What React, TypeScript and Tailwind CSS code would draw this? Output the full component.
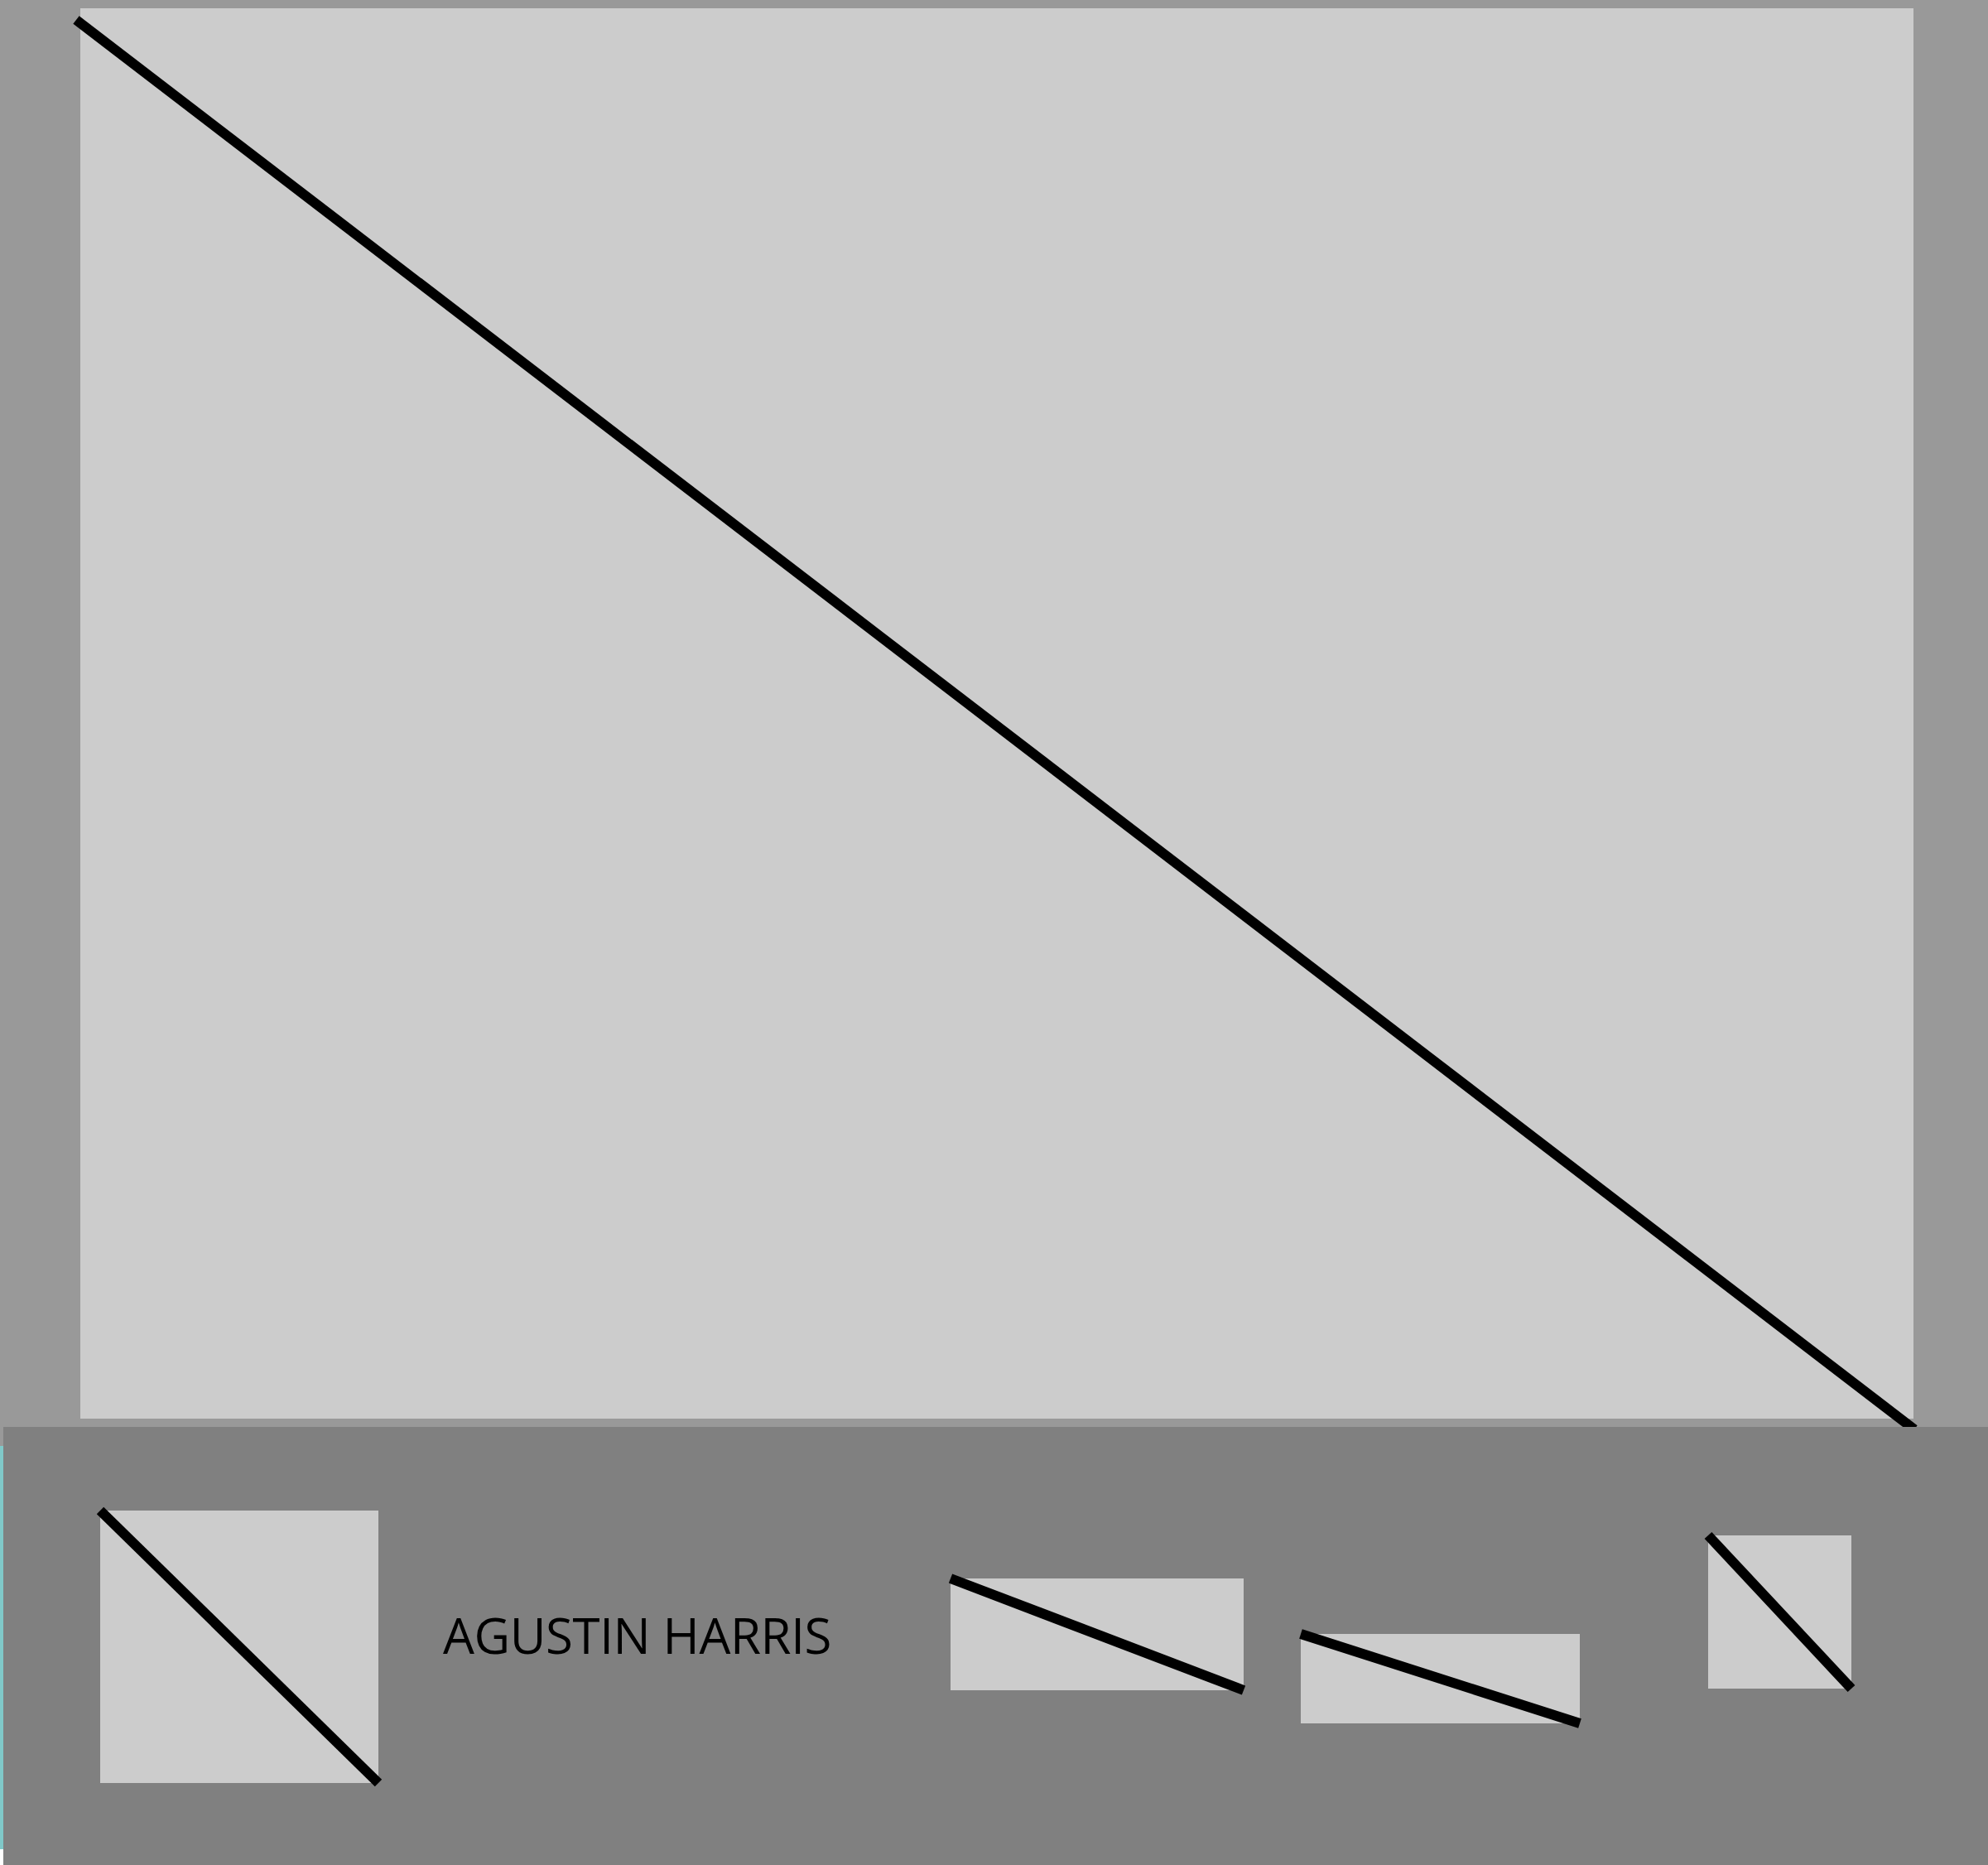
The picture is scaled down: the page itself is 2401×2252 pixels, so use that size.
import React from 'react';

function Placeholder({ w, h, className = '' }: { w: number; h: number; className?: string }) {
  return (
    <div className={`relative shrink-0 bg-[#cccccc] ${className}`} style={{ width: w, height: h }}>
      <svg className="absolute inset-0 overflow-visible" width={w} height={h}>
        <line x1={0} y1={0} x2={w} y2={h} stroke="#000" strokeWidth={12} />
      </svg>
    </div>
  );
}

export default function App() {
  return (
    <div className="w-[2401px] h-[2252px] bg-white overflow-hidden" style={{ fontFamily: '"Open Sans", "Liberation Sans", sans-serif' }}>
      {/* hero area */}
      <div className="relative h-[1723px] bg-[#999999] pt-[10px] pl-[97px] overflow-hidden">
        <div className="w-[2214px] h-[1703px] bg-[#cccccc]" />
        <svg className="absolute inset-0" width={2401} height={1723}>
          <line x1={92} y1={24} x2={2312} y2={1726} stroke="#000" strokeWidth={12} />
        </svg>
      </div>

      <div className="flex h-[529px]">
        {/* left edge strip */}
        <div className="w-[4px] flex flex-col shrink-0">
          <div className="h-[23px] bg-[#999999]" />
          <div className="h-[487px] bg-[#80c8c8]" />
          <div className="flex-1 bg-white" />
        </div>

        {/* footer */}
        <div className="flex-1 bg-[#808080] flex items-start">
          <Placeholder w={336} h={329} className="ml-[117px] mt-[101px]" />
          <div className="ml-[78px] mt-[221px] w-[613px] shrink-0 text-[60px] leading-[60px] tracking-[-0.4px] text-black whitespace-nowrap">
            AGUSTIN HARRIS
          </div>
          <Placeholder w={354} h={135} className="mt-[183px]" />
          <Placeholder w={337} h={108} className="ml-[69px] mt-[250px]" />
          <Placeholder w={173} h={185} className="ml-[155px] mt-[131px]" />
        </div>
      </div>
    </div>
  );
}
